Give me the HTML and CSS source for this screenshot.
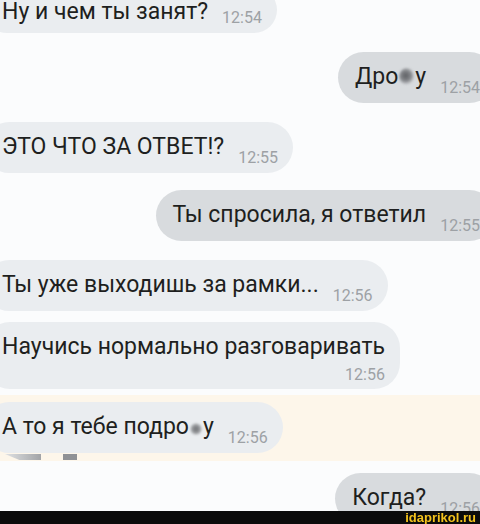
FILE: index.html
```html
<!doctype html>
<html>
    <head>
        <meta charset="utf-8">
        <meta name="viewport" content="width=device-width,initial-scale=1">
        <title>Чат</title>
        <link rel="stylesheet" href="styles.css">
    </head>
    <body>
        <section class="chat">
            <div class="msg in first">
                <span class="text">Ну и чем ты занят?</span>
                <span class="time">12:54</span>
            </div>
            <div class="msg out">
                <span class="text">Дро<span class="smudge"></span>у</span>
                <span class="time">12:54</span>
            </div>
            <div class="msg in">
                <span class="text">ЭТО ЧТО ЗА ОТВЕТ!?</span>
                <span class="time">12:55</span>
            </div>
            <div class="msg out near">
                <span class="text">Ты спросила, я ответил</span>
                <span class="time">12:55</span>
            </div>
            <div class="msg in">
                <span class="text">Ты уже выходишь за рамки...</span>
                <span class="time">12:56</span>
            </div>
            <div class="msg in tight wrap">
                <span class="text">Научись нормально разговаривать</span>
                <span class="time">12:56</span>
            </div>
            <div class="band">
                <div class="msg in">
                    <span class="text">А то я тебе подро<span class="smudge small"></span>у</span>
                    <span class="time">12:56</span>
                </div>
                <span class="blot one"></span>
                <span class="blot two"></span>
            </div>
            <div class="msg out last">
                <span class="text">Когда?</span>
                <span class="time">12:56</span>
            </div>
        </section>
        <div class="watermark">idaprikol.ru</div>
    </body>
</html>
```

FILE: styles.css
```css
html, body {
    margin: 0;
    height: 100%;
    overflow: hidden;
}
body {
    font-family: Roboto, "Liberation Sans", Arial, sans-serif;
    background: #fbfcfd;
    color: #1e1f20;
}
.chat {
    display: flex;
    flex-direction: column;
}
.msg {
    display: flex;
    align-items: flex-end;
    gap: 14px;
    padding: 11px 15px 6px 18px;
    border-radius: 26px;
    margin-top: 19px;
}
.msg .text {
    font-size: 23px;
    line-height: 27px;
    margin-bottom: 7px;
    white-space: nowrap;
}
.msg .time {
    font-size: 16px;
    line-height: 18px;
    color: #9da1a5;
    white-space: nowrap;
}
.msg.in {
    align-self: flex-start;
    margin-left: -16px;
    background: #eaedf0;
}
.msg.out {
    align-self: flex-end;
    margin-right: -15px;
    padding-left: 17px;
    background: #d8dbde;
}
.msg.first {
    margin-top: -13px;
}
.msg.first .text {
    margin-bottom: 2px;
}
.msg.near {
    margin-top: 17px;
}
.msg.tight {
    margin-top: 11px;
}
.msg.wrap {
    flex-direction: column;
    align-items: flex-end;
    gap: 0;
    padding-bottom: 5px;
}
.msg.wrap .text {
    margin-bottom: 6px;
}
.band {
    position: relative;
    margin-top: 6px;
    padding: 7px 0 8px;
    background: #fdf6ea;
    display: flex;
}
.band .msg {
    margin-top: 0;
}
.msg.last {
    margin-top: 12px;
}
.smudge {
    display: inline-block;
    width: 15px;
    height: 17px;
    margin: 0 1px -1px;
    border-radius: 50%;
    background: radial-gradient(circle at 45% 45%, #5f6165 0, #838589 40%, rgba(200,202,205,0) 75%);
    filter: blur(1px);
}
.smudge.small {
    width: 12px;
    height: 12px;
    background: radial-gradient(circle, #6f7175 0, #96989b 45%, rgba(220,222,224,0) 80%);
}
.blot {
    position: absolute;
    top: 59px;
    height: 6px;
    filter: blur(0.6px);
}
.blot.one {
    left: 5px;
    width: 36px;
    background: linear-gradient(90deg, #dfe1e3, #a2a4a7);
    clip-path: polygon(0 0, 100% 0, 100% 100%, 40% 100%);
}
.blot.two {
    left: 63px;
    width: 14px;
    background: #8f9195;
}
.watermark {
    position: fixed;
    left: 0;
    right: 0;
    bottom: 0;
    height: 13px;
    background: #0b0b0b;
    color: #f3c21c;
    font-family: "Liberation Sans", Arial, sans-serif;
    font-weight: bold;
    font-size: 13px;
    line-height: 13px;
    text-align: right;
    padding-right: 4px;
}
```
